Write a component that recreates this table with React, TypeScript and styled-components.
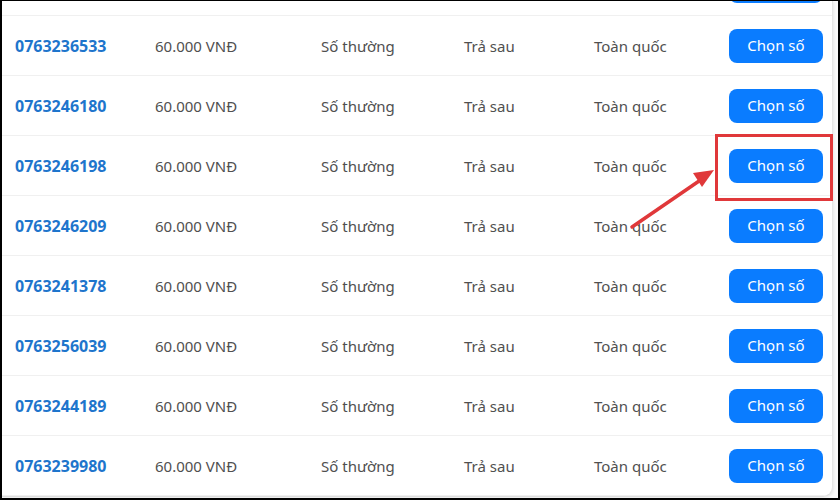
import React from "react";
import styled, { createGlobalStyle } from "styled-components";

const GlobalStyle = createGlobalStyle`
  html, body { margin: 0; padding: 0; background: #ffffff; }
  * { box-sizing: border-box; }
`;

const Frame = styled.div`
  position: relative;
  width: 840px;
  height: 500px;
  border-top: 1px solid #000;
  border-left: 2px solid #000;
  border-right: 2px solid #000;
  border-bottom: 2px solid #000;
  background: #fafafa;
  overflow: hidden;
`;

const Card = styled.div`
  width: 831px;
  height: 496px;
  background: #ffffff;
  border-right: 1px solid #e6e6e6;
  border-bottom: 1px solid #dedede;
  border-bottom-right-radius: 10px;
  box-shadow: 1px 1px 3px rgba(0, 0, 0, 0.08);
  overflow: hidden;
`;

const List = styled.div`
  display: flex;
  flex-direction: column;
  margin-top: -45px;
`;

const Row = styled.div`
  display: grid;
  grid-template-columns: 140px 166px 143px 130px 1fr auto;
  align-items: center;
  height: 60px;
  padding: 0 9px 0 13px;
  border-bottom: 1px solid #f0f0f0;
  font-family: "Noto Sans", "Open Sans", sans-serif;
  font-size: 15px;
  color: #505050;
`;

const Phone = styled.span`
  font-family: "Open Sans", "Noto Sans", sans-serif;
  font-weight: 700;
  font-size: 16px;
  color: #1e75cc;
`;

const Cell = styled.span`
  white-space: nowrap;
`;

const PickButton = styled.button`
  width: 94px;
  height: 34px;
  border: none;
  border-radius: 8px;
  background: #0a7cff;
  color: #ffffff;
  font-family: "Noto Sans", "Open Sans", sans-serif;
  font-size: 15px;
  padding: 0 0 2px;
  cursor: pointer;
`;

const Highlight = styled.div`
  position: absolute;
  left: 713px;
  top: 133px;
  width: 118px;
  height: 67px;
  border: 3px solid #e0383a;
`;

const Arrow = styled.svg`
  position: absolute;
  left: 620px;
  top: 155px;
  width: 100px;
  height: 80px;
  overflow: visible;
`;

const numbers = [
  "0763230000",
  "0763236533",
  "0763246180",
  "0763246198",
  "0763246209",
  "0763241378",
  "0763256039",
  "0763244189",
  "0763239980",
];

export default function App() {
  return (
    <>
      <GlobalStyle />
      <Frame>
        <Card>
          <List>
            {numbers.map((n) => (
              <Row key={n}>
                <Phone>{n}</Phone>
                <Cell>60.000 VNĐ</Cell>
                <Cell>Số thường</Cell>
                <Cell>Trả sau</Cell>
                <Cell>Toàn quốc</Cell>
                <PickButton>Chọn số</PickButton>
              </Row>
            ))}
          </List>
        </Card>
        <Highlight />
        <Arrow viewBox="0 0 100 80">
          <line x1="10" y1="71" x2="80" y2="23" stroke="#e0383a" strokeWidth="3.5" strokeLinecap="round" />
          <polygon points="92,14 71,17 80,31" fill="#e0383a" />
        </Arrow>
      </Frame>
    </>
  );
}
